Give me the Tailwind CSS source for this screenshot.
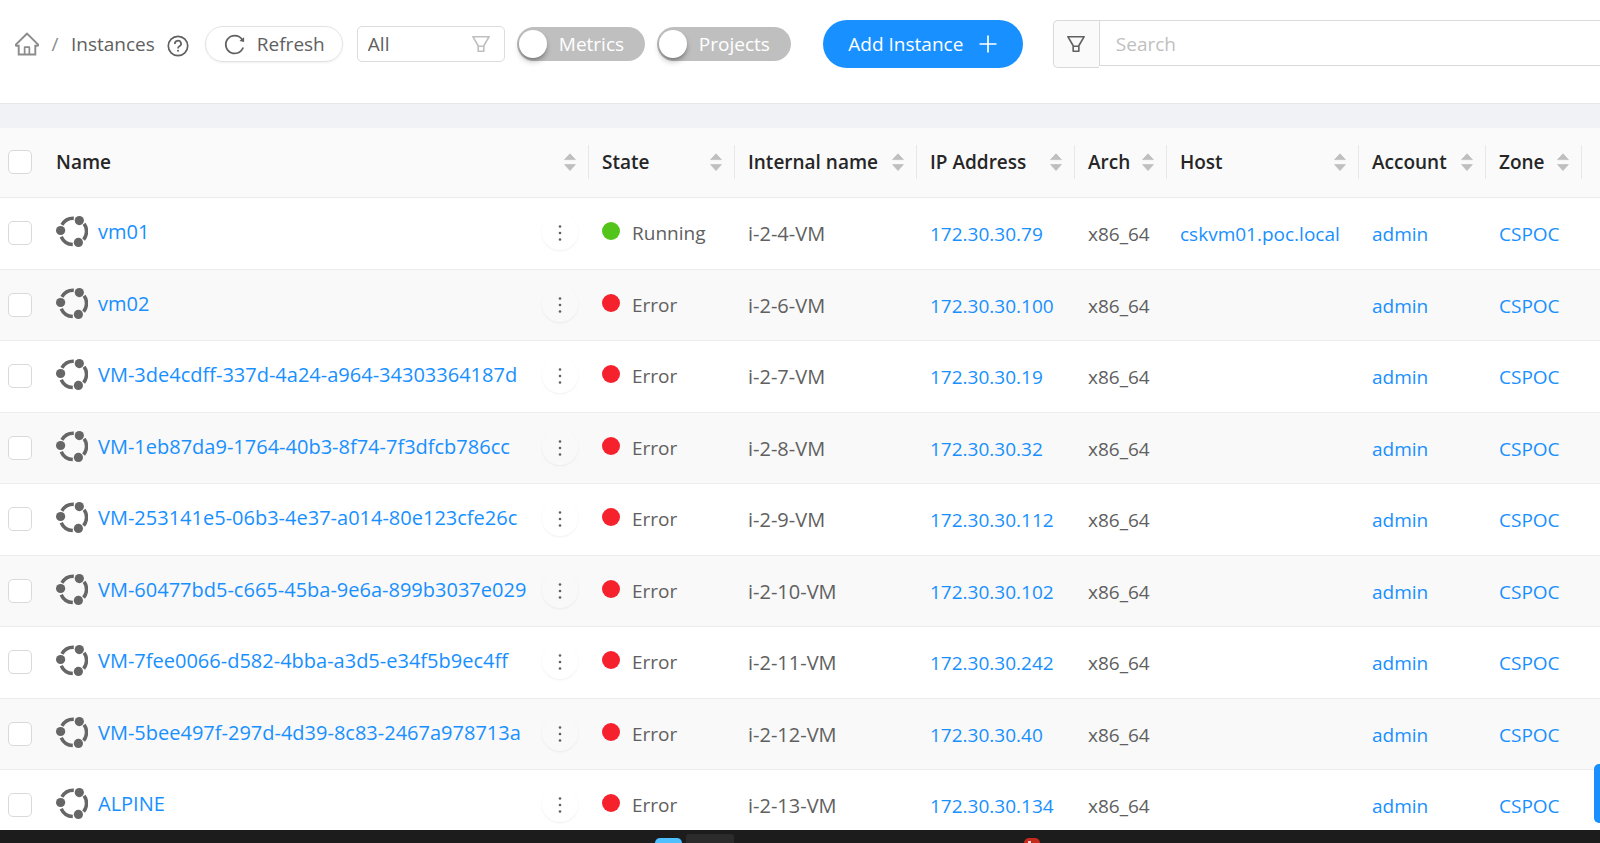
<!DOCTYPE html>
<html lang="en">
<head>
  <meta charset="UTF-8" />
  <meta name="viewport" content="width=device-width, initial-scale=1" />
  <title>Instances</title>
  <script src="https://cdn.jsdelivr.net/npm/@tailwindcss/browser@4"></script>
</head>
<body class="flex h-screen flex-col overflow-hidden bg-[#f0f2f5] font-['Segoe_UI','Open_Sans','Noto_Sans',sans-serif] text-[19px] leading-7 text-[#606060]">

  <!-- Shared icons -->
  <svg class="hidden" aria-hidden="true">
    <symbol id="icon-filter" viewBox="64 64 896 896">
      <path d="M880.1 154H143.9c-24.5 0-39.8 26.7-27.5 48L349 597.4V838c0 17.7 14.2 32 31.8 32h262.4c17.6 0 31.8-14.3 31.8-32V597.4L907.7 202c12.2-21.3-3.1-48-27.6-48zM603.4 798H420.6V642h182.9v156zm9.6-236.6l-9.5 16.6h-183l-9.5-16.6L212.7 226h598.6L613 561.4z"/>
    </symbol>
    <symbol id="icon-sorter" viewBox="0 0 12 18">
      <path d="M6 0.8L11.4 6.6H0.6zM6 17.6L11.4 11.6H0.6z" stroke="currentColor" stroke-width="0.8" stroke-linejoin="round"/>
    </symbol>
    <symbol id="icon-ubuntu" viewBox="0 0 32 32">
      <g fill="none" stroke="currentColor" stroke-width="3.5">
        <path d="M28.1 7.8A13.2 13.2 0 0 1 27.6 23.7"/>
        <path d="M17.8 2.2A13.2 13.2 0 0 0 5.9 8.8"/>
        <path d="M5.2 20.8A13.2 13.2 0 0 0 16.8 28.6"/>
      </g>
      <circle cx="4.6" cy="14.5" r="4.6"/>
      <circle cx="23.3" cy="4.6" r="4.6"/>
      <circle cx="22.4" cy="26.4" r="4.6"/>
    </symbol>
  </svg>

  <header class="flex items-center border-b border-[#e8e8ea] bg-white pt-5 pb-[35px] pl-[15px]">
    <nav class="flex items-center" aria-label="Breadcrumb">
      <a href="#" aria-label="Home" class="text-[#8c8c8c]">
        <svg class="size-6" viewBox="64 64 896 896" fill="currentColor" aria-hidden="true">
          <path d="M946.5 505L560.1 118.8l-25.9-25.9a31.5 31.5 0 0 0-44.4 0L77.5 505a63.9 63.9 0 0 0-18.8 46c.4 35.2 29.7 63.3 64.9 63.3h42.5V940h691.8V614.3h43.4c17.1 0 33.2-6.7 45.3-18.8a63.6 63.6 0 0 0 18.7-45.3c0-17-6.7-33.1-18.8-45.2zM568 868H456V664h112v204zm217.9-325.7V868H632V640c0-22.1-17.9-40-40-40H432c-22.1 0-40 17.9-40 40v228H238.1V542.3h-96l370-369.7 23.1 23.1L882 542.3h-96.1z"/>
        </svg>
      </a>
      <span class="w-8 text-center text-[#8c8c8c]">/</span>
      <span>Instances</span>
      <a href="#" aria-label="Help" class="ml-3 pt-1">
        <svg class="size-[22px]" viewBox="0 0 22 22" fill="none" stroke="currentColor" stroke-width="1.7" aria-hidden="true">
          <circle cx="11" cy="11" r="9.7"/>
          <path d="M7.9 9A3.1 2.9 0 1 1 12.4 11.2Q11 11.9 11 13.4"/>
          <circle cx="11" cy="15.8" r="1" fill="currentColor" stroke="none"/>
        </svg>
      </a>
    </nav>

    <button type="button" class="ml-4 flex h-9 w-[138px] items-center gap-3 rounded-full border border-[#e2e2e2] pl-[18px] shadow-sm shadow-black/5">
      <svg class="size-[21px]" viewBox="64 64 896 896" fill="currentColor" aria-hidden="true">
        <path d="M909.1 209.3l-56.4 44.1C775.8 155.1 656.2 92 521.9 92 290 92 102.3 279.5 102 511.5 101.7 743.7 289.8 932 521.9 932c181.3 0 335.8-115 394.6-276.1 1.5-4.2-.7-8.9-4.9-10.3l-56.7-19.5a8 8 0 0 0-10.1 4.8c-1.8 5-3.8 10-5.9 14.9-17.3 41-42.1 77.8-73.7 109.4A344.77 344.77 0 0 1 655.9 829c-42.3 17.9-87.4 27-133.8 27-46.5 0-91.5-9.1-133.8-27A341.5 341.5 0 0 1 279 755.2a342.16 342.16 0 0 1-73.7-109.4c-17.9-42.4-27-87.4-27-133.9s9.1-91.5 27-133.9c17.3-41 42.1-77.8 73.7-109.4 31.6-31.6 68.4-56.4 109.3-73.8 42.3-17.9 87.4-27 133.8-27 46.5 0 91.5 9.1 133.8 27a341.5 341.5 0 0 1 109.3 73.8c9.9 9.9 19.2 20.4 27.8 31.4l-60.2 47a8 8 0 0 0 3 14.1l175.6 43c5 1.2 9.9-2.6 9.9-7.7l.8-180.9c-.1-6.6-7.8-10.3-13-6.2z"/>
      </svg>
      Refresh
    </button>

    <div class="relative ml-3.5">
      <select aria-label="Filter by" class="h-9 w-[148px] appearance-none rounded-[5px] border border-[#dcdcdc] bg-white pl-2.5">
        <option>All</option>
      </select>
      <svg class="pointer-events-none absolute top-2 right-3.5 size-5 text-[#bfbfbf]" fill="currentColor" aria-hidden="true"><use href="#icon-filter"/></svg>
    </div>

    <label class="ml-3 flex h-[34px] w-32 cursor-pointer items-center gap-3 rounded-full bg-[#bfbfbf] pl-0.5 text-white has-checked:bg-[#1890ff]">
      <input type="checkbox" role="switch" class="size-7 appearance-none rounded-full bg-white shadow-md shadow-black/30" />
      Metrics
    </label>
    <label class="ml-3 flex h-[34px] w-[134px] cursor-pointer items-center gap-3 rounded-full bg-[#bfbfbf] pl-0.5 text-white has-checked:bg-[#1890ff]">
      <input type="checkbox" role="switch" class="size-7 appearance-none rounded-full bg-white shadow-md shadow-black/30" />
      Projects
    </label>

    <button type="button" class="ml-8 flex h-12 w-[200px] items-center justify-center gap-4 rounded-full bg-[#1890ff] text-white">
      Add Instance
      <svg class="size-[18px]" viewBox="0 0 18 18" stroke="currentColor" stroke-width="1.7" aria-hidden="true"><path d="M9 0.5V17.5M0.5 9H17.5"/></svg>
    </button>

    <div class="ml-[30px] flex min-w-0 flex-1 items-start">
      <button type="button" aria-label="Search filters" class="flex h-12 w-[46px] items-center justify-center rounded-l-[5px] border border-r-0 border-[#d9d9d9] bg-[#fafafa]">
        <svg class="size-5" fill="currentColor" aria-hidden="true"><use href="#icon-filter"/></svg>
      </button>
      <input type="search" aria-label="Search" placeholder="Search" class="h-[46px] min-w-0 flex-1 border border-r-0 border-[#d9d9d9] px-4 pt-0.5 outline-none placeholder:text-[#bfbfbf]" />
    </div>
  </header>

  <main class="min-h-0 flex-1 overflow-hidden pt-6">
    <table class="w-full table-fixed bg-white text-left">
      <colgroup>
        <col class="w-[43px]" />
        <col />
        <col class="w-[146px]" />
        <col class="w-[182px]" />
        <col class="w-[158px]" />
        <col class="w-[92px]" />
        <col class="w-[192px]" />
        <col class="w-[127px]" />
        <col class="w-[96px]" />
        <col class="w-[18px]" />
      </colgroup>
      <thead class="bg-[#fafafa] text-[#262626]">
        <tr id="headRow" class="h-[69px] border-b border-[#ececec]">
          <th class="pl-2"><input type="checkbox" aria-label="Select all" class="block size-6 appearance-none rounded-[5px] border border-[#d9d9d9] bg-white checked:bg-[#1890ff]" /></th>
        </tr>
      </thead>
      <tbody id="instanceRows"></tbody>
    </table>
  </main>

  <!-- Side drawer handle -->
  <button type="button" aria-label="Settings" class="absolute right-0 bottom-5 h-[59px] w-1.5 rounded-l-[5px] bg-[#1890ff]"></button>

  <footer class="flex h-[13px] items-end overflow-hidden bg-[#1c1c1c] pl-[655px]">
    <span class="h-[5px] w-[27px] rounded-t-[5px] bg-[#4fc0ff]"></span>
    <span class="ml-1 h-[9px] w-12 rounded-t-[3px] bg-[#2b2b2b]"></span>
    <span class="ml-[290px] flex h-[5px] w-4 rounded-t-full bg-[#c42b1c] pl-1"><span class="mt-[3px] h-0.5 w-[3px] bg-white/80"></span></span>
  </footer>

  <script>
    const columns = ['Name', 'State', 'Internal name', 'IP Address', 'Arch', 'Host', 'Account', 'Zone'];

    const instances = [
      { name: 'vm01', state: 'Running', internal: 'i-2-4-VM', ip: '172.30.30.79', host: 'cskvm01.poc.local' },
      { name: 'vm02', state: 'Error', internal: 'i-2-6-VM', ip: '172.30.30.100', host: '' },
      { name: 'VM-3de4cdff-337d-4a24-a964-34303364187d', state: 'Error', internal: 'i-2-7-VM', ip: '172.30.30.19', host: '' },
      { name: 'VM-1eb87da9-1764-40b3-8f74-7f3dfcb786cc', state: 'Error', internal: 'i-2-8-VM', ip: '172.30.30.32', host: '' },
      { name: 'VM-253141e5-06b3-4e37-a014-80e123cfe26c', state: 'Error', internal: 'i-2-9-VM', ip: '172.30.30.112', host: '' },
      { name: 'VM-60477bd5-c665-45ba-9e6a-899b3037e029', state: 'Error', internal: 'i-2-10-VM', ip: '172.30.30.102', host: '' },
      { name: 'VM-7fee0066-d582-4bba-a3d5-e34f5b9ec4ff', state: 'Error', internal: 'i-2-11-VM', ip: '172.30.30.242', host: '' },
      { name: 'VM-5bee497f-297d-4d39-8c83-2467a978713a', state: 'Error', internal: 'i-2-12-VM', ip: '172.30.30.40', host: '' },
      { name: 'ALPINE', state: 'Error', internal: 'i-2-13-VM', ip: '172.30.30.134', host: '' }
    ];

    const stateColors = { Running: 'bg-[#52c41a]', Error: 'bg-[#f5222d]' };

    const headRow = document.getElementById('headRow');
    const instanceRows = document.getElementById('instanceRows');

    // Header cells, each with sort arrows and a short divider on the right
    headRow.innerHTML += columns.map(title => `
      <th class="p-0 font-semibold whitespace-nowrap">
        <div class="flex h-[34px] items-center justify-between border-r border-[#e8e8e8] pr-3 pl-[13px]">
          ${title}
          <svg class="h-[18px] w-3 shrink-0 text-[#bfbfbf]" fill="currentColor" aria-hidden="true"><use href="#icon-sorter"/></svg>
        </div>
      </th>`).join('') + '<th class="p-0"></th>';

    instanceRows.innerHTML = instances.map(vm => `
      <tr class="h-[72px] border-b border-[#ececec] whitespace-nowrap even:h-[71px] even:bg-[#f9f9f9]">
        <td class="pl-2"><input type="checkbox" aria-label="Select ${vm.name}" class="block size-6 appearance-none rounded-[5px] border border-[#d9d9d9] bg-white checked:bg-[#1890ff]" /></td>
        <td class="pr-[11px] pb-0.5 pl-[13px]">
          <div class="flex items-center">
            <svg class="size-8 shrink-0 text-[#666]" fill="currentColor" aria-hidden="true"><use href="#icon-ubuntu"/></svg>
            <a href="#" class="ml-2.5 text-[20px] text-[#1890ff]">${vm.name}</a>
            <button type="button" aria-label="Actions for ${vm.name}" class="ml-auto flex size-9 items-center justify-center rounded-full pt-0.5 shadow-sm shadow-black/5">
              <svg class="h-4 w-1" viewBox="0 0 4 16" fill="currentColor" aria-hidden="true"><circle cx="2" cy="1.5" r="1.3"/><circle cx="2" cy="8" r="1.3"/><circle cx="2" cy="14.5" r="1.3"/></svg>
            </button>
          </div>
        </td>
        <td class="pl-[13px]">
          <div class="flex items-center gap-3"><span class="mb-1 size-[18px] rounded-full ${stateColors[vm.state]}"></span>${vm.state}</div>
        </td>
        <td class="pt-0.5 pl-[13px] text-[20px]">${vm.internal}</td>
        <td class="pt-0.5 pl-[13px]"><a href="#" class="text-[#1890ff]">${vm.ip}</a></td>
        <td class="pt-0.5 pl-[13px]">x86_64</td>
        <td class="pt-0.5 pl-[13px]"><a href="#" class="text-[#1890ff]">${vm.host}</a></td>
        <td class="pt-0.5 pl-[13px]"><a href="#" class="text-[#1890ff]">admin</a></td>
        <td class="pt-0.5 pl-[13px]"><a href="#" class="text-[#1890ff]">CSPOC</a></td>
        <td></td>
      </tr>`).join('');
  </script>

</body>
</html>
